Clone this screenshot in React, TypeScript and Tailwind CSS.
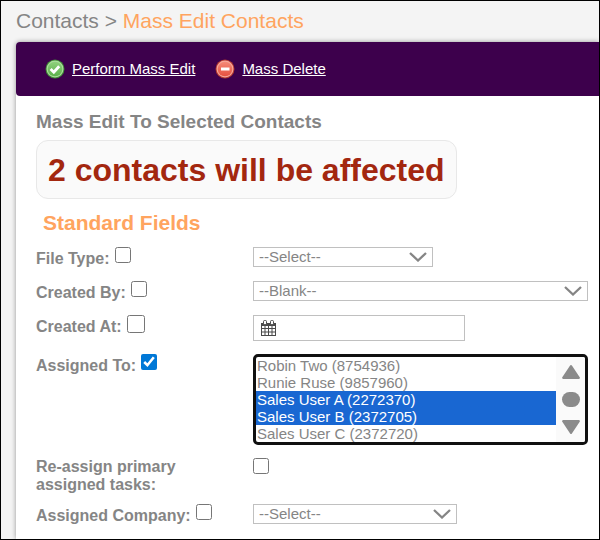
import React, { useRef, useState } from "react";

const USERS = [
    "Robin Two (8754936)",
    "Runie Ruse (9857960)",
    "Sales User A (2272370)",
    "Sales User B (2372705)",
    "Sales User C (2372720)",
];

function CheckIcon() {
    return (
        <svg className="size-5" viewBox="0 0 20 20" aria-hidden="true">
            <defs>
                <linearGradient id="green" x1="0" y1="0" x2="0" y2="1">
                    <stop offset="0" stopColor="#8fd07c" />
                    <stop offset="1" stopColor="#5cb14c" />
                </linearGradient>
            </defs>
            <circle cx="10" cy="10" r="9.5" fill="#3f8a35" />
            <circle cx="10" cy="10" r="8.5" fill="#a9dc9b" />
            <circle cx="10" cy="10" r="7.3" fill="url(#green)" />
            <path d="M5.6 10l3.2 3.2 5.4-6" fill="none" stroke="#fff" strokeWidth="2.8" />
        </svg>
    );
}

function MinusIcon() {
    return (
        <svg className="size-5" viewBox="0 0 20 20" aria-hidden="true">
            <defs>
                <linearGradient id="red" x1="0" y1="0" x2="0" y2="1">
                    <stop offset="0" stopColor="#f58a78" />
                    <stop offset="1" stopColor="#e5503f" />
                </linearGradient>
            </defs>
            <circle cx="10" cy="10" r="9.5" fill="#b3382f" />
            <circle cx="10" cy="10" r="8.5" fill="#f6a79a" />
            <circle cx="10" cy="10" r="7.3" fill="url(#red)" />
            <rect x="6" y="8.5" width="8.5" height="3" fill="#fff" />
        </svg>
    );
}

function CalendarIcon() {
    return (
        <svg className="w-[15px] h-4" viewBox="0 0 15 16" aria-hidden="true">
            <path d="M0 3h15v13H0z" fill="#4a4a4a" />
            <path
                d="M1 6h2.5v2H1zM4.5 6H7v2H4.5zM8 6h2.5v2H8zM11.5 6H14v2h-2.5zM1 9h2.5v2.5H1zM4.5 9H7v2.5H4.5zM8 9h2.5v2.5H8zM11.5 9H14v2.5h-2.5zM1 12.5h2.5V15H1zM4.5 12.5H7V15H4.5zM8 12.5h2.5V15H8zM11.5 12.5H14V15h-2.5z"
                fill="#fff"
            />
            <rect x="2.5" y="0.5" width="3" height="4" rx="1" fill="#fff" stroke="#4a4a4a" />
            <rect x="9.5" y="0.5" width="3" height="4" rx="1" fill="#fff" stroke="#4a4a4a" />
        </svg>
    );
}

type SelectProps = {
    label: string;
    value: string;
    className: string;
};

function Select({ label, value, className }: SelectProps) {
    return (
        <div className={`relative ${className}`}>
            <select
                aria-label={label}
                className="block w-full h-5 appearance-none rounded-none border border-[#c0c0c0] bg-white pl-[5px] pr-8 text-[15px] leading-[18px] font-normal text-[#858585]"
            >
                <option>{value}</option>
            </select>
            <svg
                className="pointer-events-none absolute right-1.5 top-[5px] w-[18px] h-2.5"
                viewBox="0 0 18 10"
                aria-hidden="true"
            >
                <path d="M1 1l8 7.5L17 1" fill="none" stroke="#858585" strokeWidth="2.3" />
            </svg>
        </div>
    );
}

type FieldProps = {
    id: string;
    label: string;
    checked?: boolean;
    boxSize?: string;
    children: React.ReactNode;
};

function Field({ id, label, checked = false, boxSize = "size-4", children }: FieldProps) {
    return (
        <div className="flex items-start">
            <div className="flex w-[217px] shrink-0 items-start gap-[5px]">
                <label htmlFor={id} className="pt-[3px]">{label}</label>
                <input
                    id={id}
                    type="checkbox"
                    defaultChecked={checked}
                    className={`${boxSize} shrink-0 accent-[#0078d7]`}
                />
            </div>
            {children}
        </div>
    );
}

function UserList() {
    const [selected, setSelected] = useState<string[]>([USERS[2], USERS[3]]);
    const listRef = useRef<HTMLSelectElement>(null);

    const scroll = (amount: number) => listRef.current?.scrollBy({ top: amount });

    return (
        <div className="flex min-w-0 flex-1 overflow-hidden rounded-[5px] border-[3px] border-[#101010] bg-white">
            <select
                ref={listRef}
                multiple
                size={5}
                aria-label="Assigned To"
                value={selected}
                onChange={(e) => setSelected(Array.from(e.target.selectedOptions, (o) => o.value))}
                className="h-[85px] min-w-0 flex-1 overflow-y-auto p-0 text-[15px] leading-[17px] font-normal text-[#858585] outline-none [scrollbar-width:none]"
            >
                {USERS.map((user) => (
                    <option
                        key={user}
                        className="h-[17px] min-h-0 px-px py-0 checked:bg-linear-to-r checked:from-[#1967d2] checked:to-[#1967d2] checked:[-webkit-text-fill-color:#fff]"
                    >
                        {user}
                    </option>
                ))}
            </select>
            <div className="flex w-[29px] flex-col items-center justify-between bg-[#fafafa] py-2">
                <button type="button" aria-label="Scroll up" onClick={() => scroll(-17)}>
                    <svg className="w-[18px] h-3.5" viewBox="0 0 18 14">
                        <path d="M9 1.2L16.8 12.8H1.2z" fill="#8b8b8b" stroke="#8b8b8b" strokeWidth="2.2" strokeLinejoin="round" />
                    </svg>
                </button>
                <span className="h-[15px] w-[18px] rounded-full bg-[#8b8b8b]" />
                <button type="button" aria-label="Scroll down" onClick={() => scroll(17)}>
                    <svg className="w-[18px] h-3.5" viewBox="0 0 18 14">
                        <path d="M9 12.8L1.2 1.2h15.6z" fill="#8b8b8b" stroke="#8b8b8b" strokeWidth="2.2" strokeLinejoin="round" />
                    </svg>
                </button>
            </div>
        </div>
    );
}

export default function App() {
    return (
        <div className="flex min-h-screen flex-col overflow-hidden border border-black bg-[#f4f4f4] pl-[15px] font-['Liberation_Sans',Arial,sans-serif] text-[#858585]">
            <h1 className="pt-2 pb-[9px] text-[21px] leading-6">
                Contacts &gt; <span className="text-[#ffa45f]">Mass Edit Contacts</span>
            </h1>
            <main className="flex-1 rounded-tl bg-white shadow-[0_0_5px_rgba(0,0,0,0.4)]">
                <nav className="flex h-[54px] items-center gap-5 rounded-l bg-[#3d004c] pl-[29px] text-[15px] text-white">
                    <a href="#edit" className="flex items-center gap-[7px]">
                        <CheckIcon />
                        <span className="underline">Perform Mass Edit</span>
                    </a>
                    <a href="#delete" className="flex items-center gap-[7px]">
                        <MinusIcon />
                        <span className="underline">Mass Delete</span>
                    </a>
                </nav>
                <form className="pt-[15px] pr-[11px] pb-3 pl-5">
                    <h2 className="text-[19px] leading-[22px] font-bold">Mass Edit To Selected Contacts</h2>
                    <p className="mt-[7px] w-fit rounded-xl border border-[#e8e8e8] bg-[#fafafa] px-[11px] pt-2.5 pb-2 text-[32px] leading-[39px] font-bold text-[#a3270f]">
                        2 contacts will be affected
                    </p>
                    <h3 className="mt-3 pl-[7px] text-[21px] leading-6 font-bold text-[#ffa45f]">Standard Fields</h3>
                    <div className="mt-3 flex flex-col gap-[13px] text-[16px] leading-[18px] font-bold">
                        <Field id="fileType" label="File Type:">
                            <Select label="File Type" value="--Select--" className="w-[180px]" />
                        </Field>
                        <Field id="createdBy" label="Created By:">
                            <Select label="Created By" value="--Blank--" className="flex-1" />
                        </Field>
                        <Field id="createdAt" label="Created At:" boxSize="size-[18px]">
                            <div className="flex h-[26px] w-[212px] items-center border border-[#c0c0c0] pl-[7px]">
                                <CalendarIcon />
                                <input
                                    type="text"
                                    aria-label="Created At"
                                    className="ml-2 min-w-0 flex-1 text-[15px] font-normal outline-none"
                                />
                            </div>
                        </Field>
                        <Field id="assignedTo" label="Assigned To:" checked>
                            <UserList />
                        </Field>
                    </div>
                    <div className="mt-[13px] flex flex-col gap-2.5 text-[16px] leading-[18px] font-bold">
                        <div className="flex items-start">
                            <div className="w-[217px] shrink-0 pr-12">
                                <label htmlFor="reassign">Re-assign primary assigned tasks:</label>
                            </div>
                            <input id="reassign" type="checkbox" className="size-4 accent-[#0078d7]" />
                        </div>
                        <Field id="company" label="Assigned Company:">
                            <Select label="Assigned Company" value="--Select--" className="w-[204px]" />
                        </Field>
                    </div>
                </form>
            </main>
        </div>
    );
}
